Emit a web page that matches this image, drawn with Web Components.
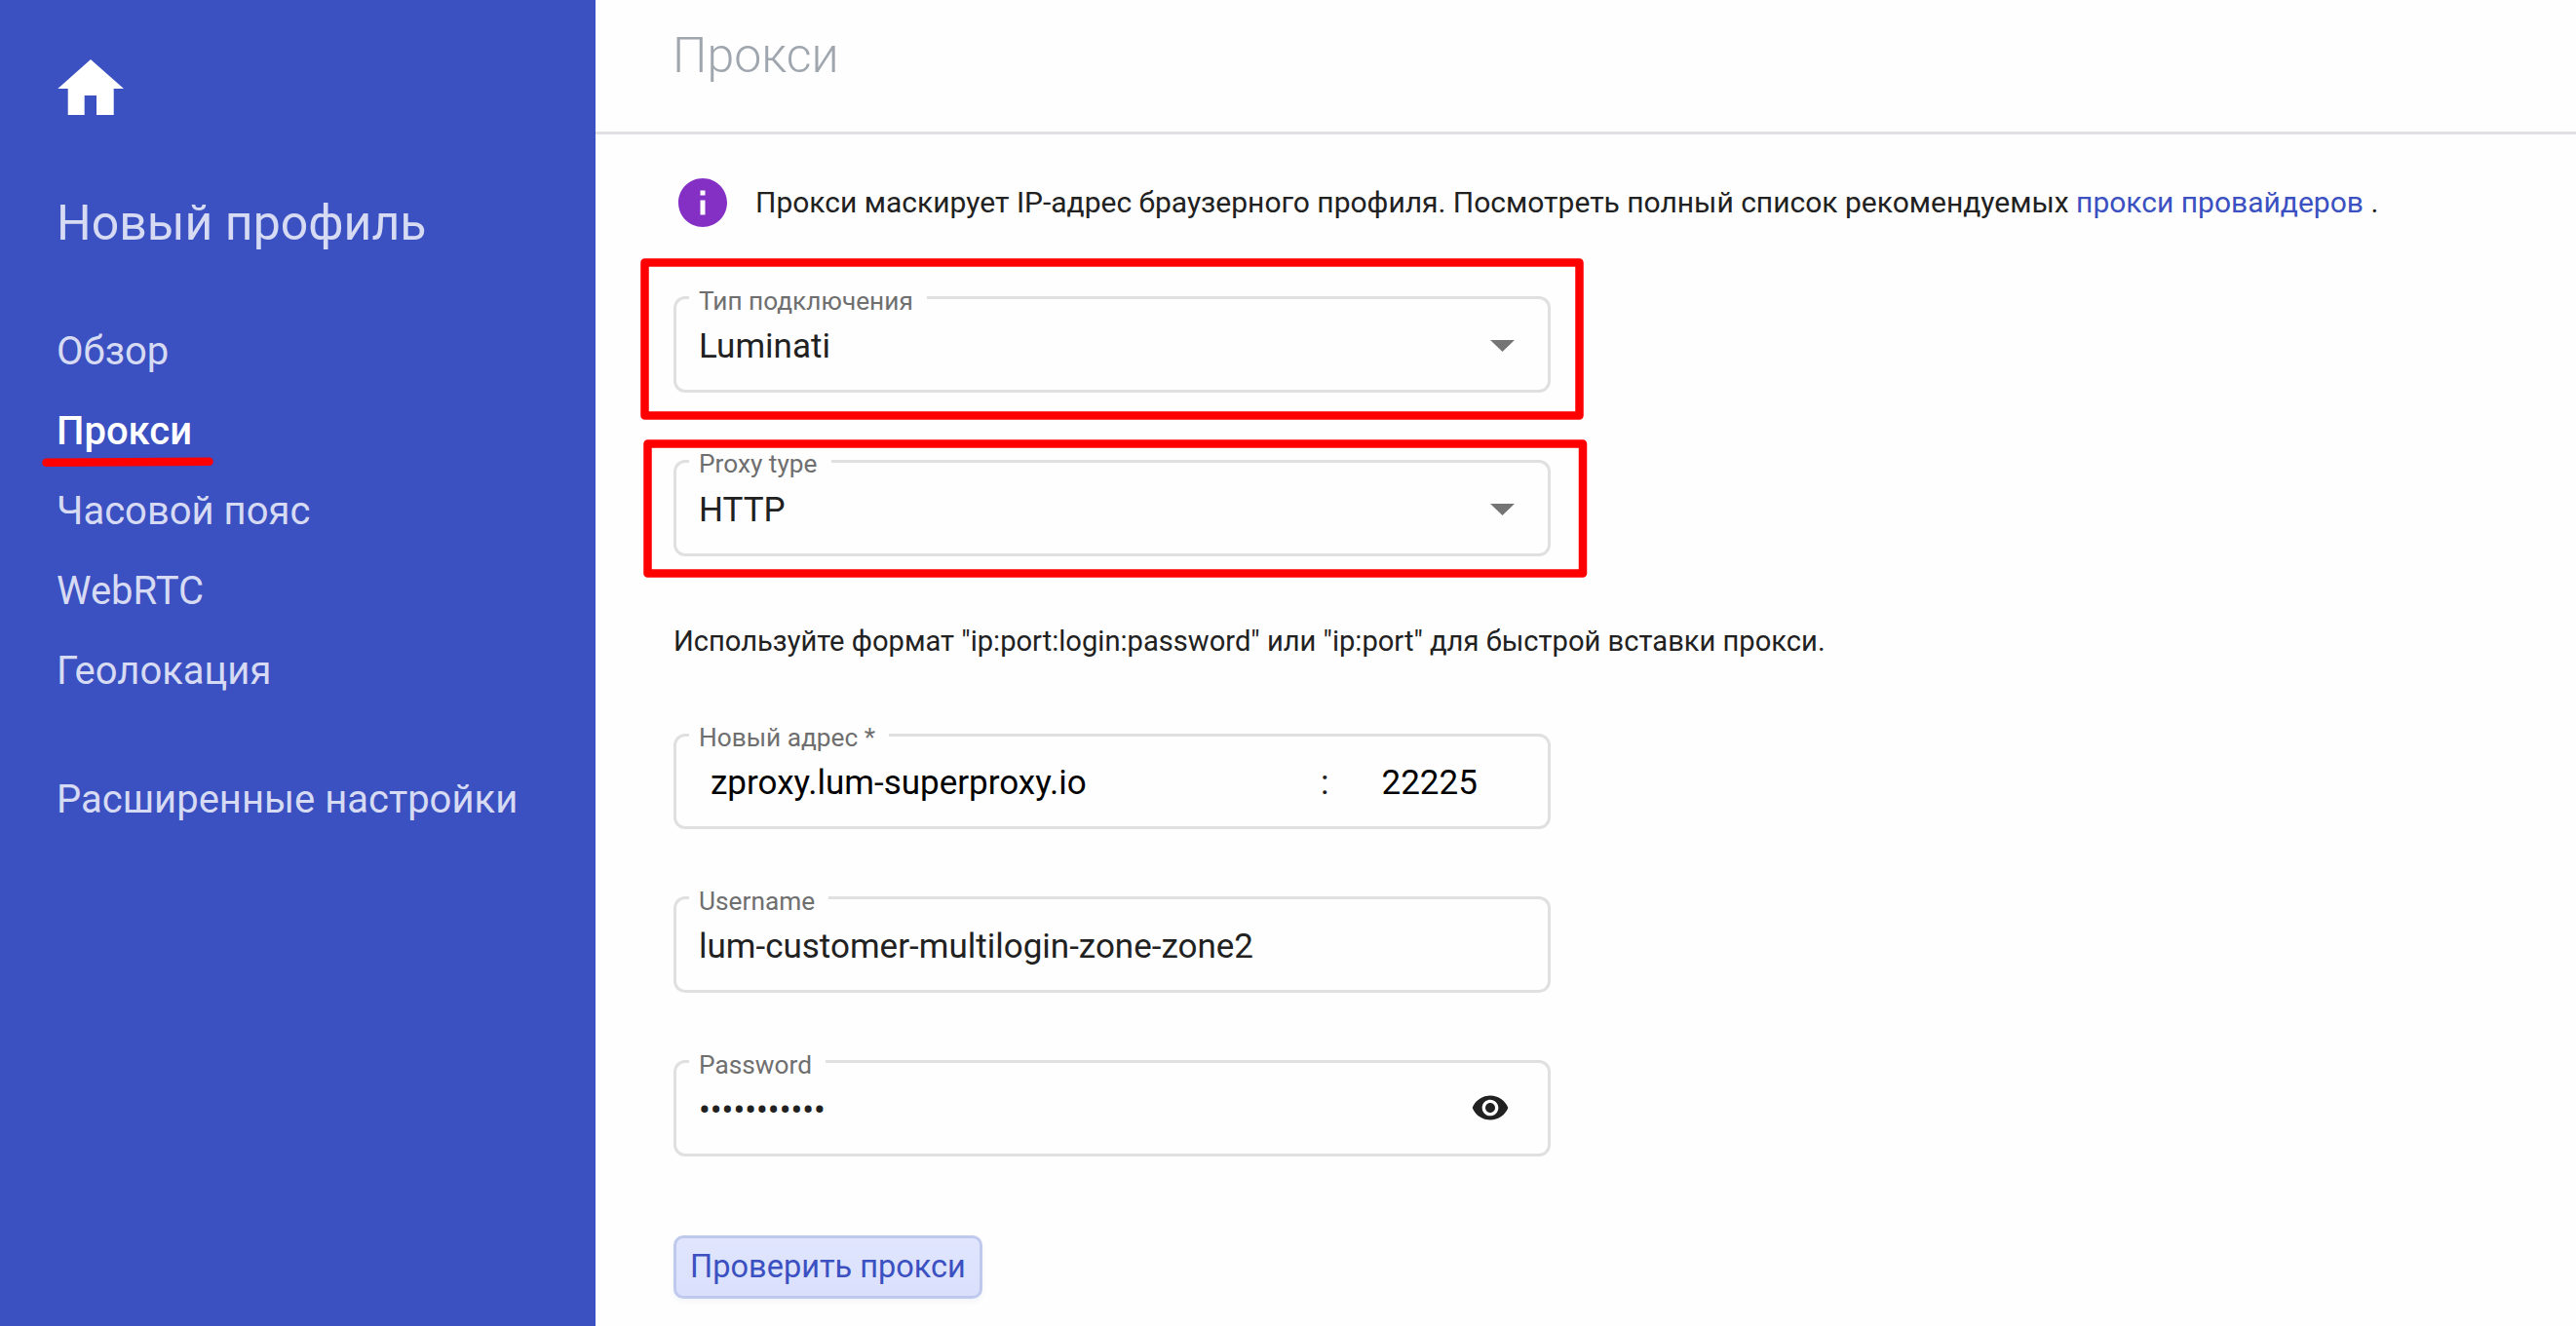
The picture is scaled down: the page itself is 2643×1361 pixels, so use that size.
<!DOCTYPE html>
<html lang="ru">
<head>
<meta charset="utf-8">
<title>Прокси</title>
<style>
  html, body {
    margin: 0;
    height: 100%;
    overflow: hidden;
  }

  body {
    font-family: Roboto, "Open Sans", sans-serif;
    color: #212121;
    background: #fefefe;
  }
</style>
</head>
<body>

<profile-app>
  <profile-sidebar slot="sidebar" name="Новый профиль">
    <nav-item>Обзор</nav-item>
    <nav-item active>Прокси</nav-item>
    <nav-item>Часовой пояс</nav-item>
    <nav-item>WebRTC</nav-item>
    <nav-item>Геолокация</nav-item>
    <nav-item slot="extra">Расширенные настройки</nav-item>
  </profile-sidebar>

  <page-header>Прокси</page-header>

  <proxy-form>
    <info-note slot="note">Прокси маскирует IP-адрес браузерного профиля. Посмотреть полный список рекомендуемых <a>прокси провайдеров</a> .</info-note>

    <outlined-field slot="type" label="Тип подключения" icon="arrow">Luminati</outlined-field>
    <outlined-field slot="type" class="high-label" label="Proxy type" icon="arrow">HTTP</outlined-field>

    <outlined-field slot="login" class="address high-label" label="Новый адрес *"><host-port host="zproxy.lum-superproxy.io" port="22225"></host-port></outlined-field>
    <outlined-field slot="login" label="Username">lum-customer-multilogin-zone-zone2</outlined-field>
    <outlined-field slot="login" label="Password" icon="eye">•••••••••••</outlined-field>

    <check-button slot="action">Проверить прокси</check-button>
  </proxy-form>
</profile-app>

<mark-layer></mark-layer>

<script>
// Shared base: puts the static template of a class into an open shadow root
class BaseElement extends HTMLElement {
    constructor() {
        super();
        this.attachShadow({ mode: "open" });
    }

    connectedCallback() {
        this.shadowRoot.innerHTML = this.render();
    }
}

class ProfileApp extends BaseElement {
    render() {
        return `
          <style>
            :host {
              display: grid;
              grid-template-columns: 611px 1fr;
              height: 100vh;
            }

            main {
              display: flex;
              flex-direction: column;
              min-width: 0;
            }
          </style>

          <slot name="sidebar"></slot>
          <main><slot></slot></main>
        `;
    }
}

class ProfileSidebar extends BaseElement {
    render() {
        return `
          <style>
            :host {
              display: flex;
              flex-direction: column;
              box-sizing: border-box;
              padding: 61px 0 0 58px;
              background: #3b50c1;
              color: #d6dbf3;
            }

            svg {
              display: block;
              width: 69px;
              height: 57px;
            }

            h2 {
              margin: 81px 0 61px;
              font-size: 50px;
              line-height: 60px;
              font-weight: 400;
            }

            nav {
              display: flex;
              flex-direction: column;
            }

            .extra {
              margin-top: 50px;
            }
          </style>

          <svg viewBox="0 0 69 57" fill="#fff">
            <path d="M35 0 69 30H58.7V57H41V37H28.7V57H11.7V30H1.3z"/>
          </svg>
          <h2>${this.getAttribute("name")}</h2>
          <nav><slot></slot></nav>
          <nav class="extra"><slot name="extra"></slot></nav>
        `;
    }
}

class NavItem extends BaseElement {
    render() {
        return `
          <style>
            :host {
              display: block;
              height: 82px;
              font-size: 40px;
              line-height: 82px;
              white-space: nowrap;
            }

            :host([active]) {
              color: #fff;
              font-weight: 500;
            }
          </style>

          <slot></slot>
        `;
    }
}

class PageHeader extends BaseElement {
    render() {
        return `
          <style>
            :host {
              display: block;
              box-sizing: border-box;
              height: 138px;
              padding: 27px 0 0 79px;
              border-bottom: 3px solid #e0e1e5;
              font-size: 50px;
              line-height: 60px;
              font-weight: 300;
              color: #9fa6ae;
            }
          </style>

          <slot></slot>
        `;
    }
}

class ProxyForm extends BaseElement {
    render() {
        return `
          <style>
            :host {
              display: flex;
              flex-direction: column;
              padding: 40px 0 0 80px;
            }

            .group {
              display: flex;
              flex-direction: column;
              gap: 69px;
              width: 900px;
            }

            .types {
              margin-top: 66px;
            }

            p {
              margin: 67px 0 75px;
              font-size: 29.14px;
              line-height: 40px;
            }

            .action {
              display: flex;
              margin-top: 81px;
            }
          </style>

          <slot name="note"></slot>
          <div class="group types"><slot name="type"></slot></div>
          <p>Используйте формат "ip:port:login:password" или "ip:port" для быстрой вставки прокси.</p>
          <div class="group"><slot name="login"></slot></div>
          <div class="action"><slot name="action"></slot></div>
        `;
    }
}

class InfoNote extends BaseElement {
    render() {
        return `
          <style>
            :host {
              display: flex;
              align-items: center;
              height: 60px;
              font-size: 30px;
              line-height: 60px;
              white-space: nowrap;
            }

            svg {
              flex: none;
              width: 60px;
              height: 60px;
              margin-right: 24px;
            }

            ::slotted(a) {
              color: #3b50c1;
            }
          </style>

          <svg viewBox="0 0 24 24" fill="#8430c5">
            <path d="M12 2C6.48 2 2 6.48 2 12s4.480 10 10 10 10-4.480 10-10S17.520 2 12 2zm1 15h-2v-6h2v6zm0-8h-2V7h2v2z"/>
          </svg>
          <div><slot></slot></div>
        `;
    }
}

const FIELD_ICONS = {
    arrow: `<svg class="arrow" viewBox="0 0 25 12" fill="#757575"><path d="M0 0h25L12.500 12z"/></svg>`,
    eye: `<svg class="eye" viewBox="0 0 24 24" fill="#212121"><path d="M12 4.500C7 4.500 2.730 7.610 1 12c1.730 4.390 6 7.500 11 7.500s9.270-3.110 11-7.500c-1.730-4.390-6-7.500-11-7.500zM12 17c-2.760 0-5-2.240-5-5s2.240-5 5-5 5 2.240 5 5-2.240 5-5 5zm0-8c-1.660 0-3 1.340-3 3s1.340 3 3 3 3-1.340 3-3-1.340-3-3-3z"/></svg>`
};

class OutlinedField extends BaseElement {
    render() {
        return `
          <style>
            :host {
              display: flex;
              align-items: flex-start;
              justify-content: space-between;
              position: relative;
              box-sizing: border-box;
              height: 99px;
              padding: 31px 0 0 26px;
              font-size: 35px;
              line-height: 41px;
            }

            :host(.address) {
              height: 98px;
              padding-top: 30px;
            }

            /* outline in three parts, the middle one is open for the label */
            .outline {
              position: absolute;
              inset: 0;
              display: flex;
              pointer-events: none;
            }

            .outline > div {
              box-sizing: border-box;
              border: 3px solid #e0e0e0;
            }

            .outline .lead {
              width: 16px;
              border-right: none;
              border-radius: 12px 0 0 12px;
            }

            .outline .notch {
              border-width: 0 0 3px;
              padding: 0 14px 0 10px;
              font-size: 26.25px;
              line-height: 30px;
              margin-top: -10px;
              color: #6f6f6f;
              white-space: nowrap;
            }

            :host(.high-label) .notch {
              margin-top: -11px;
            }

            .outline .trail {
              flex: 1;
              border-left: none;
              border-radius: 0 12px 12px 0;
            }

            .value {
              flex: 1;
            }

            .arrow {
              width: 25px;
              height: 12px;
              margin: 13.500px 37px 0 0;
            }

            .eye {
              width: 40px;
              height: 40px;
              margin: -2px 41.700px 0 0;
            }
          </style>

          <div class="value"><slot></slot></div>
          ${FIELD_ICONS[this.getAttribute("icon")] || ""}
          <div class="outline">
            <div class="lead"></div>
            <div class="notch">${this.getAttribute("label")}</div>
            <div class="trail"></div>
          </div>
        `;
    }
}

class HostPort extends BaseElement {
    render() {
        return `
          <style>
            :host {
              display: grid;
              grid-template-columns: 626px 62.500px 1fr;
              padding-left: 12px;
              color: #000;
            }

            .colon {
              color: #212121;
            }
          </style>

          <span>${this.getAttribute("host")}</span>
          <span class="colon">:</span>
          <span>${this.getAttribute("port")}</span>
        `;
    }
}

class CheckButton extends BaseElement {
    render() {
        return `
          <style>
            :host {
              display: block;
            }

            button {
              display: block;
              box-sizing: border-box;
              width: 317px;
              height: 65px;
              padding: 0;
              border: 3px solid #bfc9ee;
              border-radius: 10px;
              background: linear-gradient(#e1e6fe, #dadffc);
              box-shadow: 0 3px 5px rgba(59, 80, 193, 0.06);
              font: 400 32.5px/59px Roboto, "Open Sans", sans-serif;
              color: #3b50c1;
              white-space: nowrap;
            }
          </style>

          <button type="button"><slot></slot></button>
        `;
    }
}

// Red marks drawn over the finished page
class MarkLayer extends BaseElement {
    render() {
        return `
          <style>
            :host {
              position: absolute;
              inset: 0;
              pointer-events: none;
            }

            svg {
              display: block;
              width: 100%;
              height: 100%;
            }
          </style>

          <svg fill="none" stroke="#f00" stroke-width="8.500" stroke-linejoin="round" stroke-linecap="round">
            <path d="M47.500 474.700 214.500 473.700"/>
            <rect x="661.500" y="269.500" width="959" height="157"/>
            <rect x="664.500" y="455.500" width="959.500" height="133"/>
          </svg>
        `;
    }
}

customElements.define("profile-app", ProfileApp);
customElements.define("profile-sidebar", ProfileSidebar);
customElements.define("nav-item", NavItem);
customElements.define("page-header", PageHeader);
customElements.define("proxy-form", ProxyForm);
customElements.define("info-note", InfoNote);
customElements.define("outlined-field", OutlinedField);
customElements.define("host-port", HostPort);
customElements.define("check-button", CheckButton);
customElements.define("mark-layer", MarkLayer);
</script>
</body>
</html>
